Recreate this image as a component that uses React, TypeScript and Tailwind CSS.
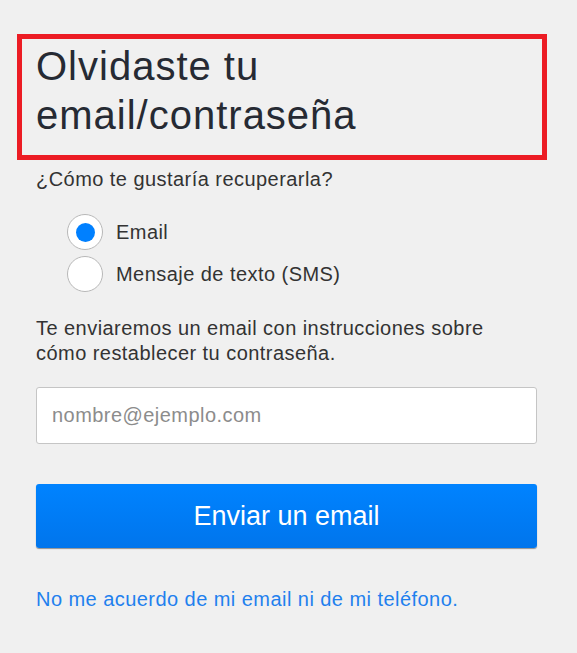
import { useState } from "react";

const options = [
  { id: "email", label: "Email" },
  { id: "sms", label: "Mensaje de texto (SMS)" },
];

const ForgotPassword = () => {
  const [method, setMethod] = useState("email");

  return (
    <div className="min-h-screen bg-[#f0f0f0] pt-[34px] font-['Liberation_Sans',Arial,sans-serif] text-[#333]">
      {/* Title box */}
      <div className="ml-[17px] w-[530px] border-[5px] border-[#ec1c24] pl-[14px] pt-[3px] pb-[15px]">
        <h1 className="text-[40px] leading-[49px] tracking-[1px] text-[#262a33]">
          Olvidaste tu
          <br />
          email/contraseña
        </h1>
      </div>

      <div className="w-[537px] pl-[36px]">
        <p className="mt-[7px] text-[20px] leading-[24px] tracking-[0.45px]">
          ¿Cómo te gustaría recuperarla?
        </p>

        {/* Recovery method */}
        <div className="mt-[20px] flex flex-col pl-[31px]">
          {options.map((opt) => (
            <button
              key={opt.id}
              onClick={() => setMethod(opt.id)}
              className="flex h-[42px] items-center gap-[13px] text-left"
            >
              <span className="flex h-[36px] w-[36px] items-center justify-center rounded-full border border-[#b8b8b8] bg-white">
                {method === opt.id && (
                  <span className="h-[19px] w-[19px] rounded-full bg-[#0080ff]"></span>
                )}
              </span>
              <span className="text-[20px] leading-[24px] tracking-[0.45px]">{opt.label}</span>
            </button>
          ))}
        </div>

        <p className="mt-[21px] text-[20px] leading-[25px] tracking-[0.45px]">
          Te enviaremos un email con instrucciones sobre
          <br />
          cómo restablecer tu contraseña.
        </p>

        <input
          type="email"
          placeholder="nombre@ejemplo.com"
          className="mt-[21px] block h-[57px] w-full rounded-[3px] border border-[#c5c5c5] bg-white px-[15px] text-[20px] tracking-[0.45px] outline-none placeholder:text-[#8c8c8c]"
        />

        <button className="mt-[40px] block h-[64px] w-full rounded-[3px] bg-gradient-to-b from-[#0083ff] to-[#0075ec] text-[27px] text-white shadow-[0_1px_1px_rgba(0,0,0,0.4)]">
          Enviar un email
        </button>

        <a
          href="#"
          className="mt-[39px] block text-[20px] leading-[24px] tracking-[0.45px] text-[#1f80ee]"
        >
          No me acuerdo de mi email ni de mi teléfono.
        </a>
      </div>
    </div>
  );
};

export default function App() {
  return <ForgotPassword />;
}
